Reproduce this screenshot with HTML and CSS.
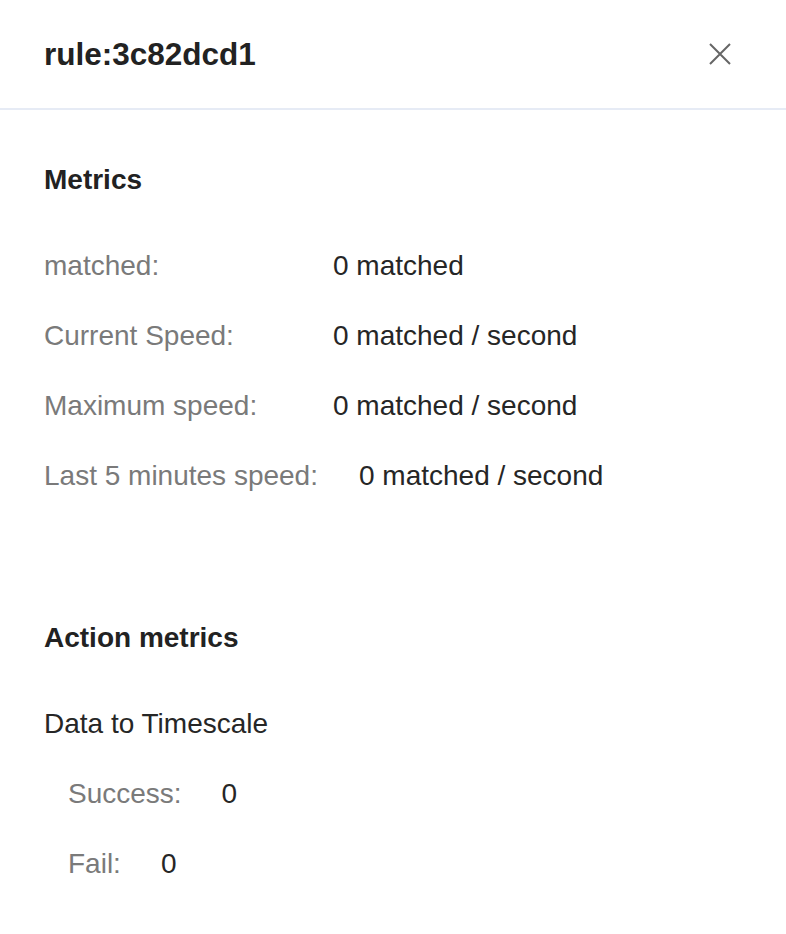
FILE: index.html
```html
<!DOCTYPE html>
<html>
<head>
<meta charset="utf-8">
<link rel="stylesheet" href="styles.css">
</head>
<body>
<div class="drawer">
  <header class="drawer-header">
    <h1 class="drawer-title">rule:3c82dcd1</h1>
    <button class="close-btn" aria-label="Close">
      <svg width="22" height="22" viewBox="0 0 22 22"><path d="M1 1 L21 21 M21 1 L1 21" stroke="#666" stroke-width="2" fill="none"/></svg>
    </button>
  </header>
  <section class="section metrics">
    <h2 class="section-title">Metrics</h2>
    <div class="row"><span class="label">matched:</span><span class="value">0 matched</span></div>
    <div class="row"><span class="label">Current Speed:</span><span class="value">0 matched / second</span></div>
    <div class="row"><span class="label">Maximum speed:</span><span class="value">0 matched / second</span></div>
    <div class="row"><span class="label">Last 5 minutes speed:</span><span class="value">0 matched / second</span></div>
  </section>
  <section class="section actions">
    <h2 class="section-title">Action metrics</h2>
    <div class="action-name">Data to Timescale</div>
    <div class="row sub"><span class="label short">Success:</span><span class="value">0</span></div>
    <div class="row sub"><span class="label short">Fail:</span><span class="value">0</span></div>
  </section>
</div>
</body>
</html>
```
FILE: styles.css
```css
html, body {
  margin: 0;
  padding: 0;
  background: #fff;
}
body {
  font-family: "Liberation Sans", Arial, Helvetica, sans-serif;
  color: #262626;
}
.drawer {
  width: 786px;
}
.drawer-header {
  height: 108px;
  padding: 0 44px;
  border-bottom: 2px solid #e6ebf5;
  display: flex;
  align-items: center;
  justify-content: space-between;
}
.drawer-title {
  margin: 0;
  font-size: 31.5px;
  font-weight: bold;
  color: #222;
  line-height: 40px;
}
.close-btn {
  border: 0;
  background: none;
  padding: 0;
  margin-right: 11px;
  width: 22px;
  height: 22px;
  display: flex;
}
.section {
  padding: 0 44px;
}
.metrics {
  padding-top: 50px;
}
.actions {
  padding-top: 122px;
}
.section-title {
  margin: 0 0 46px;
  font-size: 28px;
  font-weight: bold;
  line-height: 40px;
  color: #222;
}
.row {
  display: flex;
  font-size: 28px;
  line-height: 40px;
  margin-top: 30px;
}
.label {
  color: #7a7a7a;
  min-width: 248px;
  margin-right: 41px;
}
.label.short {
  min-width: 0;
  margin-right: 40px;
}
.value {
  color: #262626;
}
.action-name {
  font-size: 28px;
  line-height: 40px;
  margin-top: 30px;
  color: #262626;
}
.row.sub {
  padding-left: 24px;
}
```
